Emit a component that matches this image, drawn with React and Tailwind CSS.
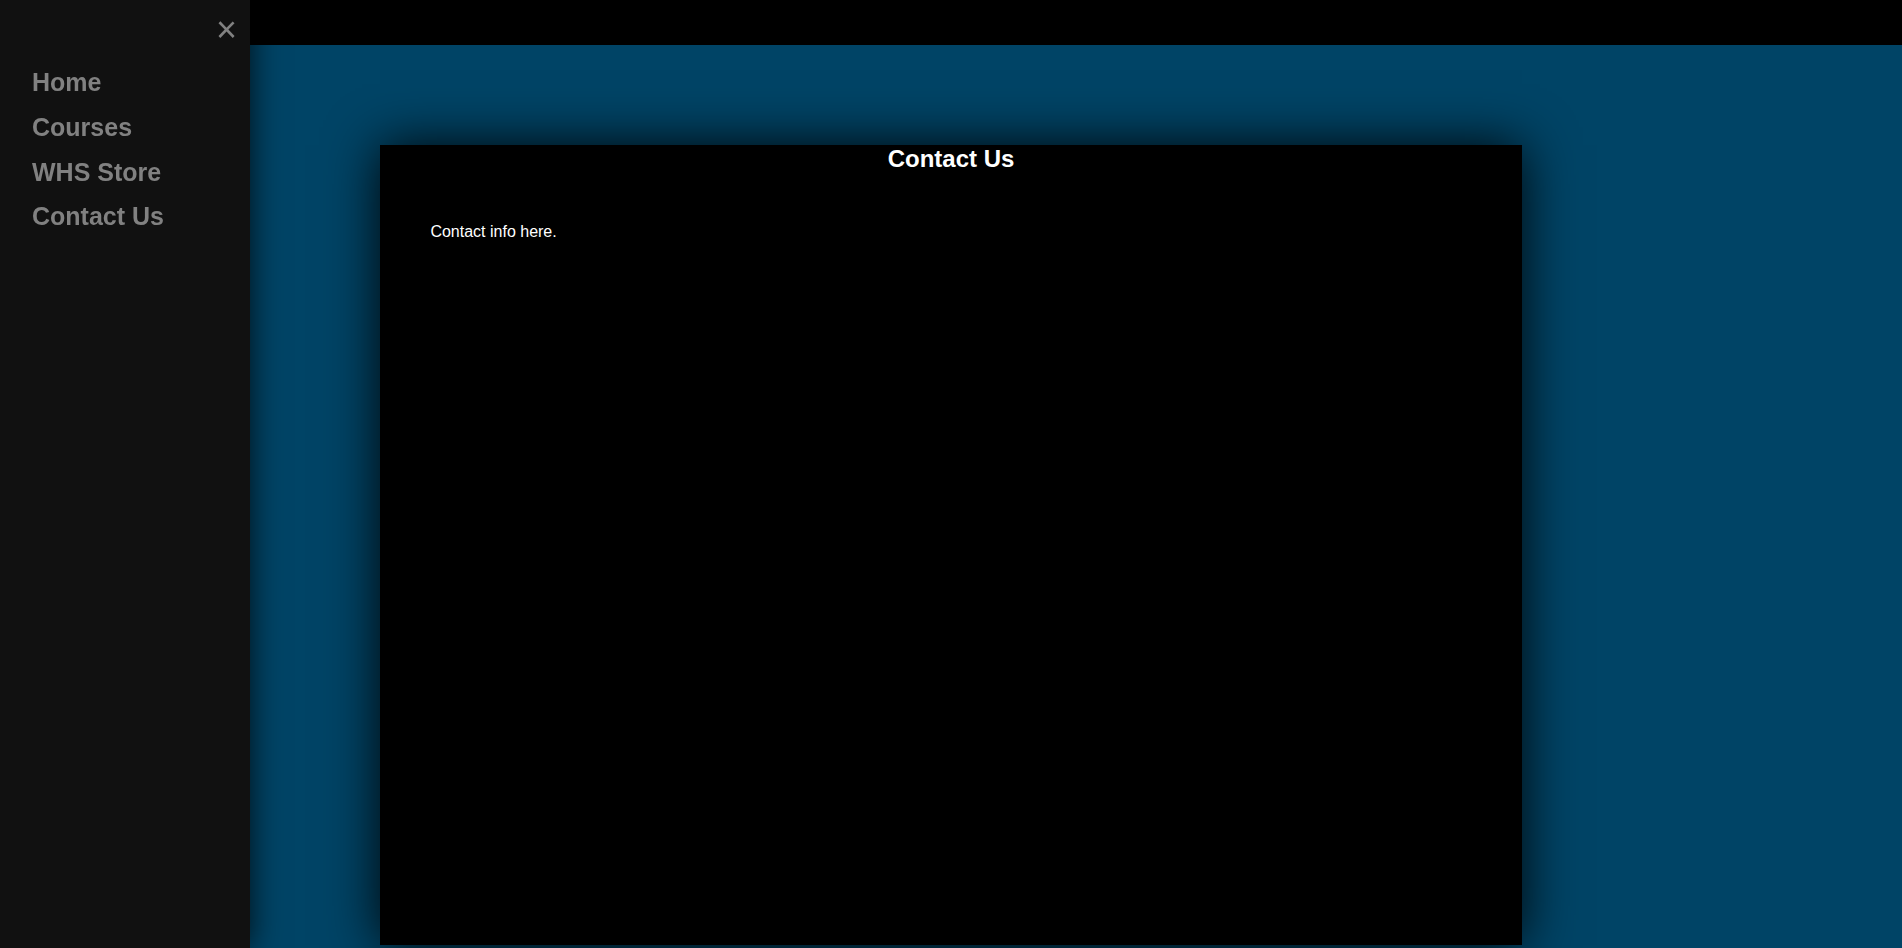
export default function App() {
  return (
    <div className="relative min-h-screen bg-[#004466] font-['Liberation_Sans',Arial,sans-serif]">
      <div className="h-[45px] w-full bg-black" />
      <main className="pt-[100px] pb-[40px]">
        <div className="mx-auto h-[800px] w-[60%] bg-black text-white shadow-[0_0_50px_rgba(0,0,0,0.95)]">
          <h2 className="m-0 text-center text-[24px] font-bold leading-[1.15]">Contact Us</h2>
          <div className="p-[50px]">
            <p className="m-0 text-[16px] leading-[1.15]">Contact info here.</p>
          </div>
        </div>
      </main>
      <nav className="fixed left-0 top-0 z-10 h-full w-[250px] bg-[#111111] pt-[60px] shadow-[0_0_30px_rgba(0,0,0,0.8)]">
        <button className="absolute right-[13px] top-[9px] cursor-pointer border-0 bg-transparent p-0 text-[36px] leading-[1.15] text-[#818181]">
          ×
        </button>
        <a href="#" className="block py-[8px] pl-[32px] pr-[8px] text-[25px] font-bold leading-[1.15] text-[#818181] no-underline">Home</a>
        <a href="#" className="block py-[8px] pl-[32px] pr-[8px] text-[25px] font-bold leading-[1.15] text-[#818181] no-underline">Courses</a>
        <a href="#" className="block py-[8px] pl-[32px] pr-[8px] text-[25px] font-bold leading-[1.15] text-[#818181] no-underline">WHS Store</a>
        <a href="#" className="block py-[8px] pl-[32px] pr-[8px] text-[25px] font-bold leading-[1.15] text-[#818181] no-underline">Contact Us</a>
      </nav>
    </div>
  );
}
